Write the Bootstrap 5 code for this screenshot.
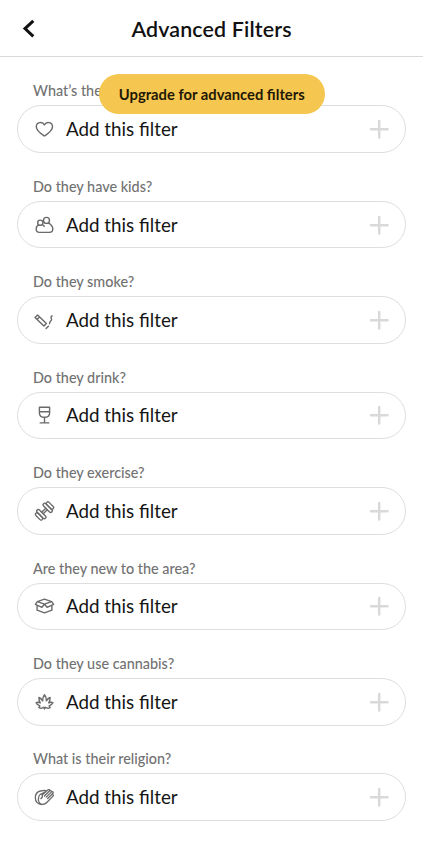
<!DOCTYPE html>
<html lang="en">
<head>
<meta charset="utf-8">
<meta name="viewport" content="width=device-width, initial-scale=1">
<title>Advanced Filters</title>
<link href="https://cdn.jsdelivr.net/npm/bootstrap@5.3.0/dist/css/bootstrap.min.css" rel="stylesheet">
<style>
body{font-family:Lato,"Open Sans",sans-serif;color:#111;background:#fff;height:850px;overflow:hidden}
.top-bar{height:57px;border-bottom:1px solid #d9d9d9}
.top-bar h1{font-size:21.4px;font-weight:600;letter-spacing:.15px;line-height:26px;padding-top:1px}
.back-btn{width:24px;height:24px;left:17px;top:15px}
.upgrade{top:73.5px;left:98.5px;width:226.5px;height:40.5px;background:#f5c750;color:#1f1805;font-size:14.75px;font-weight:700;z-index:2}
.filter-group{height:95.43px;padding:0 17px 0 16.5px}
.filter-label{height:48.4px;padding:24.4px 0 0 16.5px;font-size:14.4px;line-height:20px;color:#727272;font-weight:500}
.filter-pill{height:47.6px;border:1.2px solid #dedede;border-radius:24px;padding:0 14.5px;background:#fff;color:#151515;font-size:18.8px}
.filter-pill svg{fill:none;stroke:#6a6a6a;stroke-width:1.4;stroke-linecap:round;stroke-linejoin:round;flex:none}
.filter-pill .plus{stroke:#d9d9d9;stroke-width:2.5}
.filter-name{margin-left:10px;line-height:24px}
</style>
<script src="https://cdn.jsdelivr.net/npm/bootstrap@5.3.0/dist/js/bootstrap.bundle.min.js"></script>
</head>
<body>
<header class="top-bar d-flex align-items-center justify-content-center position-relative">
  <a href="#" class="back-btn position-absolute d-flex" aria-label="Back"><svg width="24" height="24" viewBox="0 0 24 24" fill="none" stroke="#111" stroke-width="3"><path d="M16.300 5.800 8 13.600l8.300 7.800"/></svg></a>
  <h1 class="m-0">Advanced Filters</h1>
</header>
<div class="upgrade position-absolute rounded-pill d-flex align-items-center justify-content-center">Upgrade for advanced filters</div>
<main>
  <section class="filter-group"><div class="filter-label">What’s the</div>
    <div class="filter-pill d-flex align-items-center"><svg width="24" height="24" viewBox="0 0 24 24"><path d="M12.400 19C8.500 16.400 4.300 13.700 4.300 9.700c0-4.500 6-5.700 8.100-1.900 2.100-3.800 8.100-2.600 8.100 1.900 0 4-4.200 6.700-8.100 9.300z"/></svg><span class="filter-name">Add this filter</span><svg class="plus ms-auto" width="24" height="24" viewBox="0 0 24 24"><path d="M12.200 4v16.500M4 12.200h16.500"/></svg></div></section>
  <section class="filter-group"><div class="filter-label">Do they have kids?</div>
    <div class="filter-pill d-flex align-items-center"><svg width="24" height="24" viewBox="0 0 24 24"><circle cx="14.500" cy="7.400" r="3"/><circle cx="8.300" cy="9.700" r="2.600"/><path d="M6.700 11.900C5 12.500 4.200 14 4.200 16c0 2.200 1.200 3.400 3.200 3.400h10c2.200 0 3.400-1.200 3.400-3.300 0-2.800-1.700-4.500-4.300-5.900M10.200 11.700c1 .3 1.500.9 2 1.700"/></svg><span class="filter-name">Add this filter</span><svg class="plus ms-auto" width="24" height="24" viewBox="0 0 24 24"><path d="M12.200 4v16.500M4 12.200h16.500"/></svg></div></section>
  <section class="filter-group"><div class="filter-label">Do they smoke?</div>
    <div class="filter-pill d-flex align-items-center"><svg width="24" height="24" viewBox="0 0 24 24"><path d="M3 9.500 5.600 7 14.400 15.400l-2.500 2.500zM5.100 11.300l2.500-2.400M16.400 18.300l-2.300 2.300M20.200 7.900c-2.800 1.200.3 3-.9 4.500-.6.800-2 1.200-1.700 3.200"/></svg><span class="filter-name">Add this filter</span><svg class="plus ms-auto" width="24" height="24" viewBox="0 0 24 24"><path d="M12.200 4v16.500M4 12.200h16.500"/></svg></div></section>
  <section class="filter-group"><div class="filter-label">Do they drink?</div>
    <div class="filter-pill d-flex align-items-center"><svg width="24" height="24" viewBox="0 0 24 24"><path d="M7.400 4.200h10.200v5.700c0 3-2 4.300-5.100 4.300s-5.100-1.300-5.100-4.300zM7.400 8.800h10.200M12.500 14.200v5.500M8.200 19.900h8.600"/></svg><span class="filter-name">Add this filter</span><svg class="plus ms-auto" width="24" height="24" viewBox="0 0 24 24"><path d="M12.200 4v16.500M4 12.200h16.500"/></svg></div></section>
  <section class="filter-group"><div class="filter-label">Do they exercise?</div>
    <div class="filter-pill d-flex align-items-center"><svg width="24" height="24" viewBox="0 0 24 24"><g transform="rotate(-45 12.500 12)" stroke-width="1.350"><rect x="6.400" y="6.200" width="3.200" height="11.600" rx="1.600"/><rect x="3.200" y="7.500" width="3.200" height="9" rx="1.600"/><rect x="15.400" y="6.200" width="3.200" height="11.600" rx="1.600"/><rect x="18.600" y="7.500" width="3.200" height="9" rx="1.600"/><path d="M9.600 10.900h5.800M9.600 13.100h5.800"/></g></svg><span class="filter-name">Add this filter</span><svg class="plus ms-auto" width="24" height="24" viewBox="0 0 24 24"><path d="M12.200 4v16.500M4 12.200h16.500"/></svg></div></section>
  <section class="filter-group"><div class="filter-label">Are they new to the area?</div>
    <div class="filter-pill d-flex align-items-center"><svg width="24" height="24" viewBox="0 0 24 24"><path d="M5.300 7.600 12.500 5.200l7.200 2.400 1.900 2.800-6.500 2.900-2.600-3.100-2.600 3.100-6.500-2.900zM5.300 7.600l7.200 2.600 7.200-2.600M5.100 11.600v4.600l7.400 2.700 7.400-2.700v-4.600"/></svg><span class="filter-name">Add this filter</span><svg class="plus ms-auto" width="24" height="24" viewBox="0 0 24 24"><path d="M12.200 4v16.500M4 12.200h16.500"/></svg></div></section>
  <section class="filter-group"><div class="filter-label">Do they use cannabis?</div>
    <div class="filter-pill d-flex align-items-center"><svg width="24" height="24" viewBox="0 0 24 24"><path d="M12.500 4.700c1.500 1.900 2.100 4 1.800 6.200 1-1.700 2.100-2.800 3.800-3.400.1 2-.3 3.800-1.400 5.400 1.400-.7 2.600-.8 4.200-.3-.8 1.700-2 2.700-3.800 3.200l1.100 1.800c-1.900.9-3.500.8-5-.4l-.7 1.900-.7-1.900c-1.500 1.200-3.100 1.300-5 .4l1.100-1.800c-1.800-.5-3-1.500-3.800-3.200 1.600-.5 2.800-.4 4.200.3-1.100-1.600-1.500-3.400-1.400-5.400 1.700.6 2.800 1.700 3.800 3.400-.3-2.200.3-4.300 1.800-6.200z"/></svg><span class="filter-name">Add this filter</span><svg class="plus ms-auto" width="24" height="24" viewBox="0 0 24 24"><path d="M12.200 4v16.500M4 12.200h16.500"/></svg></div></section>
  <section class="filter-group"><div class="filter-label">What is their religion?</div>
    <div class="filter-pill d-flex align-items-center"><svg width="24" height="24" viewBox="0 0 24 24"><path stroke-width="1.300" d="M8.300 6C5 6.900 3.300 9.200 3.300 12.700c0 4 2.700 6.800 6.300 6.900M8.300 6l4.500-.6c1.200 0 1.400 1.300.3 1.700L8.400 9.300c-1.800 1-1.600 2.600-2 4.700-.4 3.200 1.700 5.300 4.500 5.300 1.700 0 3-.8 4.100-2l6-6.200c1.100-1.100-.4-2.400-1.500-1.300L15.700 13.500M19.500 9.800l1.400-1.500c.9-1.200-.5-2.300-1.600-1.200l-5.100 5M19.300 7.100c.7-1.200-.8-2.100-1.800-1.100L12.400 11M17.500 6c.6-1.300-.9-1.900-1.800-1L10.200 10.100c.5 1.400 0 2.600-1.300 3.500"/></svg><span class="filter-name">Add this filter</span><svg class="plus ms-auto" width="24" height="24" viewBox="0 0 24 24"><path d="M12.200 4v16.500M4 12.200h16.500"/></svg></div></section>
</main>
</body>
</html>
